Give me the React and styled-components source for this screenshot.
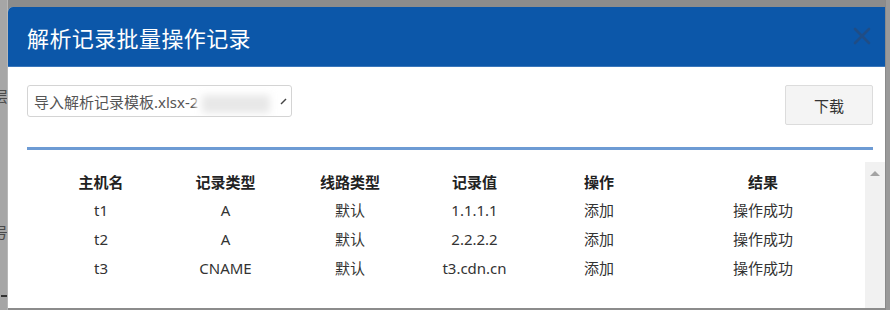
import React from "react";
import styled, { createGlobalStyle } from "styled-components";

const GlobalStyle = createGlobalStyle`
  html, body {
    margin: 0;
    padding: 0;
    background: #8c8c8c;
  }
  body {
    font-family: "Noto Sans", "Noto Sans CJK SC", sans-serif;
  }
`;

const records = [
  { host: "t1", type: "A", line: "默认", value: "1.1.1.1", op: "添加", result: "操作成功" },
  { host: "t2", type: "A", line: "默认", value: "2.2.2.2", op: "添加", result: "操作成功" },
  { host: "t3", type: "CNAME", line: "默认", value: "t3.cdn.cn", op: "添加", result: "操作成功" },
];

const columns = ["主机名", "记录类型", "线路类型", "记录值", "操作", "结果"];

export default function App() {
  return (
    <>
      <GlobalStyle />
      <Backdrop>
        <LeftStrip>
          <Fragment top={88}>层</Fragment>
          <Fragment top={224}>号</Fragment>
          <StripLine top={295} />
        </LeftStrip>
        <Modal>
          <Header>
            <Title>解析记录批量操作记录</Title>
            <Close aria-label="close">
              <svg width="18" height="18" viewBox="0 0 18 18">
                <path d="M2 2 L16 16 M16 2 L2 16" stroke="#1f4d86" strokeWidth="2.6" strokeLinecap="round" />
              </svg>
            </Close>
          </Header>
          <Body>
            <Toolbar>
              <FileBox>
                <FileName>导入解析记录模板.xlsx-2</FileName>
                <Blur />
                <Handle width="7" height="7" viewBox="0 0 7 7">
                  <path d="M1 6 L6 1" stroke="#444" strokeWidth="1.4" />
                </Handle>
              </FileBox>
              <Button>下载</Button>
            </Toolbar>
            <Divider />
          </Body>
          <TableArea>
            <Table>
              <Row head>
                {columns.map((c) => (
                  <Cell key={c} head>{c}</Cell>
                ))}
              </Row>
              {records.map((r) => (
                <Row key={r.host}>
                  <Cell>{r.host}</Cell>
                  <Cell>{r.type}</Cell>
                  <Cell>{r.line}</Cell>
                  <Cell>{r.value}</Cell>
                  <Cell>{r.op}</Cell>
                  <Cell>{r.result}</Cell>
                </Row>
              ))}
            </Table>
            <Scrollbar>
              <Arrow />
            </Scrollbar>
          </TableArea>
        </Modal>
        <RightStrip />
      </Backdrop>
    </>
  );
}

const Backdrop = styled.div`
  display: flex;
  width: 890px;
  height: 310px;
  padding-top: 7px;
  padding-bottom: 2px;
  box-sizing: border-box;
  background: #8c8c8c;
  overflow: hidden;
`;

const LeftStrip = styled.div`
  position: relative;
  width: 8px;
  margin-top: -7px;
  margin-bottom: -2px;
  background: #a6a6a6;
  border-right: 1px solid #b8b8b8;
  box-sizing: border-box;
  overflow: hidden;
`;

const Fragment = styled.span`
  position: absolute;
  top: ${(p) => p.top}px;
  right: -1px;
  font-family: "Noto Sans CJK SC", sans-serif;
  font-size: 15px;
  color: #4a4a4a;
  line-height: 1;
`;

const StripLine = styled.div`
  position: absolute;
  top: ${(p) => p.top}px;
  left: 1px;
  right: 0;
  height: 2px;
  background: #333;
`;

const RightStrip = styled.div`
  width: 4px;
  margin-top: -7px;
  margin-bottom: -2px;
  background: #9a9a9a;
  border-left: 1px solid #8a8a8a;
`;

const Modal = styled.div`
  flex: 1;
  display: flex;
  flex-direction: column;
  background: #fff;
  border-top-left-radius: 5px;
  overflow: hidden;
`;

const Header = styled.div`
  display: flex;
  align-items: center;
  justify-content: space-between;
  height: 59px;
  padding: 0 13px 0 19px;
  background: #0c57a9;
  border-bottom: 1px solid #3a77bb;
`;

const Title = styled.h2`
  margin: 0;
  color: #fff;
  font-family: "Noto Sans CJK SC", sans-serif;
  font-size: 22px;
  font-weight: 400;
  letter-spacing: 0.4px;
`;

const Close = styled.button`
  flex-shrink: 0;
  display: flex;
  align-items: center;
  justify-content: center;
  width: 20px;
  height: 20px;
  padding: 0;
  margin-top: -1px;
  border: none;
  background: transparent;
`;

const Body = styled.div`
  padding: 18px 12px 0 19px;
`;

const Toolbar = styled.div`
  display: flex;
  align-items: flex-start;
  justify-content: space-between;
`;

const FileBox = styled.div`
  position: relative;
  display: flex;
  align-items: center;
  width: 265px;
  height: 32px;
  padding-left: 6px;
  box-sizing: border-box;
  border: 1px solid #d4d4d4;
  border-radius: 3px;
  overflow: hidden;
`;

const FileName = styled.span`
  font-family: "Noto Sans", "Noto Sans CJK SC", sans-serif;
  font-size: 15px;
  color: #555;
  white-space: nowrap;
`;

const Blur = styled.div`
  position: absolute;
  left: 168px;
  top: 3px;
  width: 80px;
  height: 30px;
  background: #e8e8e8;
  border-radius: 4px;
  box-shadow: 0 0 6px 6px #fff inset;
  filter: blur(2px);
`;

const Handle = styled.svg`
  position: absolute;
  right: 4px;
  top: 12px;
`;

const Button = styled.button`
  width: 88px;
  height: 40px;
  padding: 0;
  border: 1px solid #dcdcdc;
  border-radius: 2px;
  background: #f4f4f4;
  color: #333;
  font-family: "Noto Sans CJK SC", sans-serif;
  font-size: 15px;
`;

const Divider = styled.div`
  height: 3px;
  margin-top: 22px;
  background: #6d9bd4;
`;

const TableArea = styled.div`
  flex: 1;
  display: flex;
  margin-top: 12px;
`;

const Table = styled.div`
  flex: 1;
  padding: 5px 0 0 31px;
`;

const Row = styled.div`
  display: grid;
  grid-template-columns: 124px 125px 124px 125px 124px 1fr;
  align-items: center;
  height: ${(p) => (p.head ? 28 : 29)}px;
`;

const Cell = styled.div`
  text-align: center;
  font-family: "Noto Sans", "Noto Sans CJK SC", sans-serif;
  font-size: 15px;
  font-weight: ${(p) => (p.head ? 700 : 400)};
  color: ${(p) => (p.head ? "#222" : "#333")};
  white-space: nowrap;
`;

const Scrollbar = styled.div`
  display: flex;
  justify-content: center;
  width: 20px;
  padding-top: 9px;
  box-sizing: border-box;
  background: #f1f1f1;
`;

const Arrow = styled.div`
  width: 0;
  height: 0;
  border-left: 5px solid transparent;
  border-right: 5px solid transparent;
  border-bottom: 5px solid #a3a3a3;
`;
